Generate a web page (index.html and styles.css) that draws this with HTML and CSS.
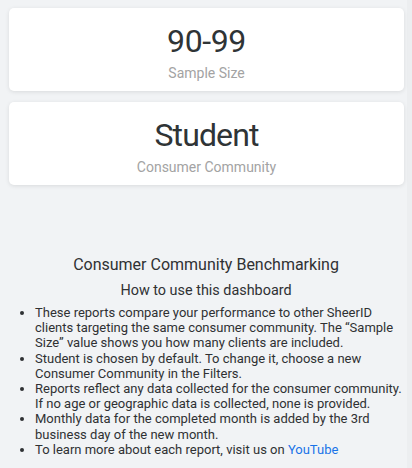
FILE: index.html
```html
<!DOCTYPE html>
<html>
<head>
<meta charset="utf-8">
<link rel="stylesheet" href="styles.css">
</head>
<body>
<div class="page">
  <div class="cards">
    <div class="card">
      <div class="value">90-99</div>
      <div class="label">Sample Size</div>
    </div>
    <div class="card">
      <div class="value value-word">Student</div>
      <div class="label">Consumer Community</div>
    </div>
  </div>
  <div class="info">
    <h1 class="title">Consumer Community Benchmarking</h1>
    <h2 class="subtitle">How to use this dashboard</h2>
    <ul class="list">
      <li>These reports compare your performance to other SheerID clients targeting the same consumer community. The “Sample Size” value shows you how many clients are included.</li>
      <li>Student is chosen by default. To change it, choose a new Consumer Community in the Filters.</li>
      <li>Reports reflect any data collected for the consumer community. If no age or geographic data is collected, none is provided.</li>
      <li>Monthly data for the completed month is added by the 3rd business day of the new month.</li>
      <li>To learn more about each report, visit us on <a class="link" href="#">YouTube</a></li>
    </ul>
  </div>
</div>
</body>
</html>
```
FILE: styles.css
```css
html, body {
  margin: 0;
  padding: 0;
  height: 100%;
}
body {
  font-family: Roboto, "Noto Sans", sans-serif;
  overflow: hidden;
}
.page {
  background: linear-gradient(to right, #f1f3f5 407px, #eceef0 407px);
  width: 412px;
  height: 100%;
}
.cards {
  display: flex;
  flex-direction: column;
  gap: 11px;
  padding: 8px 8px 0 9px;
}
.card {
  background: #fff;
  border-radius: 5px;
  box-shadow: 0 1px 4px rgba(0, 0, 0, 0.10);
  height: 83px;
  display: flex;
  flex-direction: column;
  align-items: center;
  box-sizing: border-box;
  padding-top: 14px;
}
.value {
  font-size: 32px;
  line-height: 38px;
  letter-spacing: -0.4px;
  color: #2f3436;
}
.value-word {
  letter-spacing: -0.9px;
}
.label {
  font-size: 14px;
  line-height: 18px;
  margin-top: 4px;
  color: #a3a3a3;
}
.info {
  padding: 70px 2px 0 8px;
  color: #2f3133;
}
.title {
  font-size: 16px;
  font-weight: 400;
  text-align: center;
  margin: 0 6px 0 0;
  line-height: 20px;
}
.subtitle {
  font-size: 14.4px;
  font-weight: 400;
  text-align: center;
  margin: 6px 6px 0 0;
  line-height: 20px;
}
.list {
  margin: 4px 0 0 0;
  padding-left: 27px;
  font-size: 13px;
  line-height: 15.2px;
}
.link {
  color: #1a73e8;
  text-decoration: none;
}
```
